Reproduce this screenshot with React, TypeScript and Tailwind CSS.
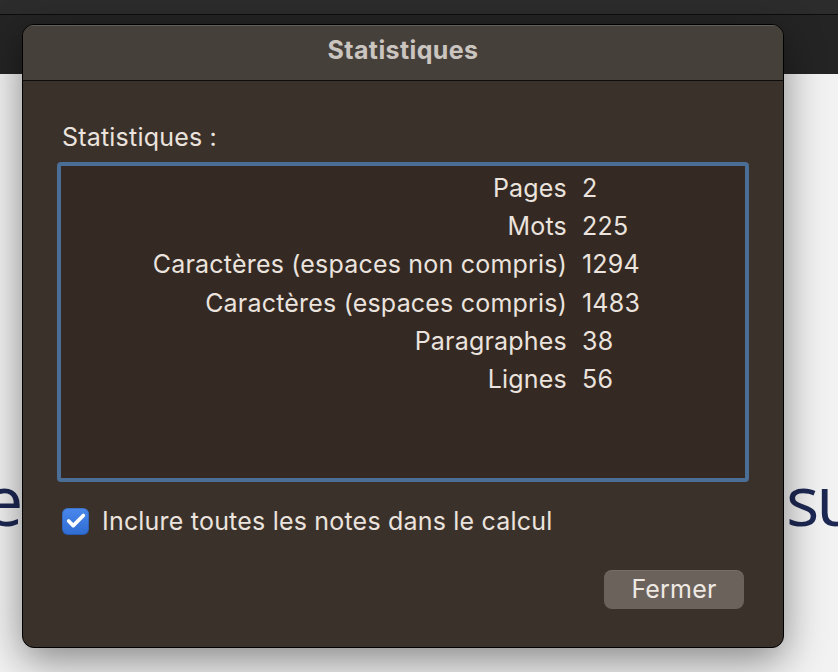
import { Check } from "lucide-react";

const stats = [
  { label: "Pages", value: "2" },
  { label: "Mots", value: "225" },
  { label: "Caractères (espaces non compris)", value: "1294" },
  { label: "Caractères (espaces compris)", value: "1483" },
  { label: "Paragraphes", value: "38" },
  { label: "Lignes", value: "56" },
];

const sans = { fontFamily: "Inter, 'Noto Sans', sans-serif" };

export default function App() {
  return (
    <div
      className="relative h-[672px] w-[838px] overflow-hidden bg-[#f2f2f2]"
      style={sans}
    >
      {/* Window chrome behind the sheet */}
      <div className="h-[14px] bg-[#2c2c2c]" />
      <div className="h-[1px] bg-[#0c0c0c]" />
      <div className="h-[59px] bg-[#242424]" />

      {/* Document text peeking out */}
      <div
        className="mt-[385px] flex overflow-hidden whitespace-nowrap text-[70px] leading-[80px] text-[#1d2853]"
        style={{ fontFamily: "'Open Sans', sans-serif" }}
      >
        <span className="-ml-[16px] w-[40px] shrink-0">e</span>
        <span className="ml-[762px] shrink-0 tracking-[-3px]">su</span>
      </div>

      {/* Sheet */}
      <div className="absolute left-[22px] top-[24px] flex h-[624px] w-[762px] flex-col overflow-hidden rounded-[12px] border border-black bg-[#3b312b] shadow-[0_12px_40px_rgba(0,0,0,0.45)]">
        <div className="flex h-[56px] shrink-0 items-center justify-center border-b border-black/80 bg-[#46403b] pb-[3px] shadow-[inset_0_1px_0_rgba(255,255,255,0.15)]">
          <span className="text-[25px] font-bold tracking-[0.4px] text-[#cbc5c0]">
            Statistiques
          </span>
        </div>

        <div className="flex flex-1 flex-col px-[34px] pt-[42px] text-[25px] tracking-[0.2px]">
          <div className="pl-[5px] leading-[28px] text-[#ebe3dd]">
            Statistiques :
          </div>

          <div className="mt-[11px] h-[320px] rounded-[4px] border-[4px] border-[#4a6e95] bg-[#342923] pt-[3px]">
            <div className="grid grid-cols-[506px_1fr] gap-x-[15px] leading-[38.2px] text-[#ebe3dd]">
              {stats.map((s) => (
                <div key={s.label} className="contents">
                  <span className="text-right">{s.label}</span>
                  <span>{s.value}</span>
                </div>
              ))}
            </div>
          </div>

          <label className="mt-[25px] flex items-center gap-[13px] pl-[5px]">
            <span className="flex h-[27px] w-[27px] shrink-0 items-center justify-center rounded-[6px] bg-gradient-to-b from-[#4a88ec] to-[#2f6cd3] shadow-[inset_0_0_0_1px_rgba(0,0,0,0.15)]">
              <Check className="h-[22px] w-[22px] text-white" strokeWidth={4} />
            </span>
            <span className="leading-[28px] text-[#ebe3dd]">
              Inclure toutes les notes dans le calcul
            </span>
          </label>

          <div className="mt-[35px] flex justify-end pr-[5px]">
            <button
              type="button"
              className="flex h-[39px] w-[140px] items-center justify-center rounded-[8px] bg-[#6b625c] text-[#efe9e4] shadow-[inset_0_1px_0_rgba(255,255,255,0.08)]"
            >
              Fermer
            </button>
          </div>
        </div>
      </div>
    </div>
  );
}
